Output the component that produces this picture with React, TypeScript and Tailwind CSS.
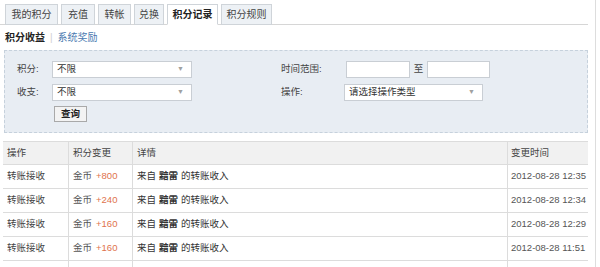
import React from "react";

const font = { fontFamily: '"Liberation Sans", "Noto Sans CJK SC", sans-serif' };

const tabs = [
  { label: "我的积分", w: "w-[53px]" },
  { label: "充值", w: "w-[34px]" },
  { label: "转帐", w: "w-[33px]" },
  { label: "兑换", w: "w-[30px]" },
  { label: "积分记录", w: "w-[51px]", active: true },
  { label: "积分规则", w: "w-[51px]" },
];

const rows = [
  { amt: "+800", time: "2012-08-28 12:35" },
  { amt: "+240", time: "2012-08-28 12:34" },
  { amt: "+160", time: "2012-08-28 12:29" },
  { amt: "+160", time: "2012-08-28 11:51" },
];

function Select({ w, text }: { w: string; text: string }) {
  return (
    <div className={`${w} h-[17px] bg-white border border-[#c9ced4] flex items-center justify-between pl-[4px] pr-[7px] text-[#333]`}>
      <span>{text}</span>
      <span className="text-[#a0a0a0] text-[7px]">▼</span>
    </div>
  );
}

export default function App() {
  return (
    <div className="w-[600px] h-[267px] overflow-hidden bg-white text-[9.5px]" style={font}>
      <div className="w-[596px] h-[267px] border-r border-[#dddddd]">
        <div className="w-[588px]">
          {/* tabs */}
          <div className="h-[25px] border-b border-[#d6d6d6] flex items-end pl-[5px] gap-[3px]">
            {tabs.map((t) => (
              <div
                key={t.label}
                className={`${t.w} h-[21px] -mb-px flex items-center justify-center border border-[#cfd4d9] text-[10px] ${
                  t.active
                    ? "bg-white border-b-white text-[#222] font-bold"
                    : "bg-[#edf1f5] text-[#444]"
                }`}
              >
                {t.label}
              </div>
            ))}
          </div>
          {/* sub tabs */}
          <div className="h-[25px] flex items-center pl-[5px] text-[10px]">
            <span className="font-bold text-[#222]">积分收益</span>
            <span className="mx-[5px] text-[#d0d0d0]">|</span>
            <span className="text-[#4a7ab0]">系统奖励</span>
          </div>
          {/* filter */}
          <div className="ml-[4px] h-[83px] bg-[#e8edf3] border border-dashed border-[#c6d1dc] pt-[10px] pl-[12px] text-[#444]">
            <div className="flex items-center h-[17px]">
              <span className="w-[35px]">积分:</span>
              <Select w="w-[140px]" text="不限" />
              <span className="w-[89px]" />
              <span className="w-[65px]">时间范围:</span>
              <div className="w-[64px] h-[17px] bg-white border border-[#c9ced4]" />
              <span className="w-[17px] text-center">至</span>
              <div className="w-[63px] h-[17px] bg-white border border-[#c9ced4]" />
            </div>
            <div className="flex items-center h-[17px] mt-[6px]">
              <span className="w-[35px]">收支:</span>
              <Select w="w-[140px]" text="不限" />
              <span className="w-[89px]" />
              <span className="w-[63px]">操作:</span>
              <Select w="w-[139px]" text="请选择操作类型" />
            </div>
            <div className="mt-[5px] ml-[37px] w-[33px] h-[16px] bg-[#f3f3f3] border border-[#a9a9a9] flex items-center justify-center text-[#222] font-bold">
              查询
            </div>
          </div>
          {/* table */}
          <div className="ml-[3px] mt-[8px] text-[#444]">
            <div className="flex h-[24px] bg-[#f1f1f1] border-t border-b border-[#dcdcdc]">
              <div className="w-[66px] border-r border-[#dcdcdc] flex items-center pl-[4px]">操作</div>
              <div className="w-[64px] border-r border-[#dcdcdc] flex items-center pl-[4px]">积分变更</div>
              <div className="w-[375px] border-r border-[#dcdcdc] flex items-center pl-[4px]">详情</div>
              <div className="flex-1 flex items-center pl-[3px]">变更时间</div>
            </div>
            {rows.map((r, i) => (
              <div key={i} className="flex h-[24px] border-b border-[#dcdcdc]">
                <div className="w-[66px] border-r border-[#dcdcdc] flex items-center pl-[4px]">转账接收</div>
                <div className="w-[64px] border-r border-[#dcdcdc] flex items-center pl-[4px] text-[#555]">
                  金币<span className="ml-[4px] text-[#e0724c]">{r.amt}</span>
                </div>
                <div className="w-[375px] border-r border-[#dcdcdc] flex items-center pl-[4px] text-[#333]">
                  来自 <span className="mx-[3px] font-bold text-[#333]">黯雷</span> 的转账收入
                </div>
                <div className="flex-1 flex items-center pl-[3px] text-[#555]">{r.time}</div>
              </div>
            ))}
            <div className="flex h-[24px] border-b border-[#dcdcdc]">
              <div className="w-[66px] border-r border-[#dcdcdc]" />
              <div className="w-[64px] border-r border-[#dcdcdc]" />
              <div className="w-[375px] border-r border-[#dcdcdc]" />
              <div className="flex-1" />
            </div>
          </div>
        </div>
      </div>
    </div>
  );
}
